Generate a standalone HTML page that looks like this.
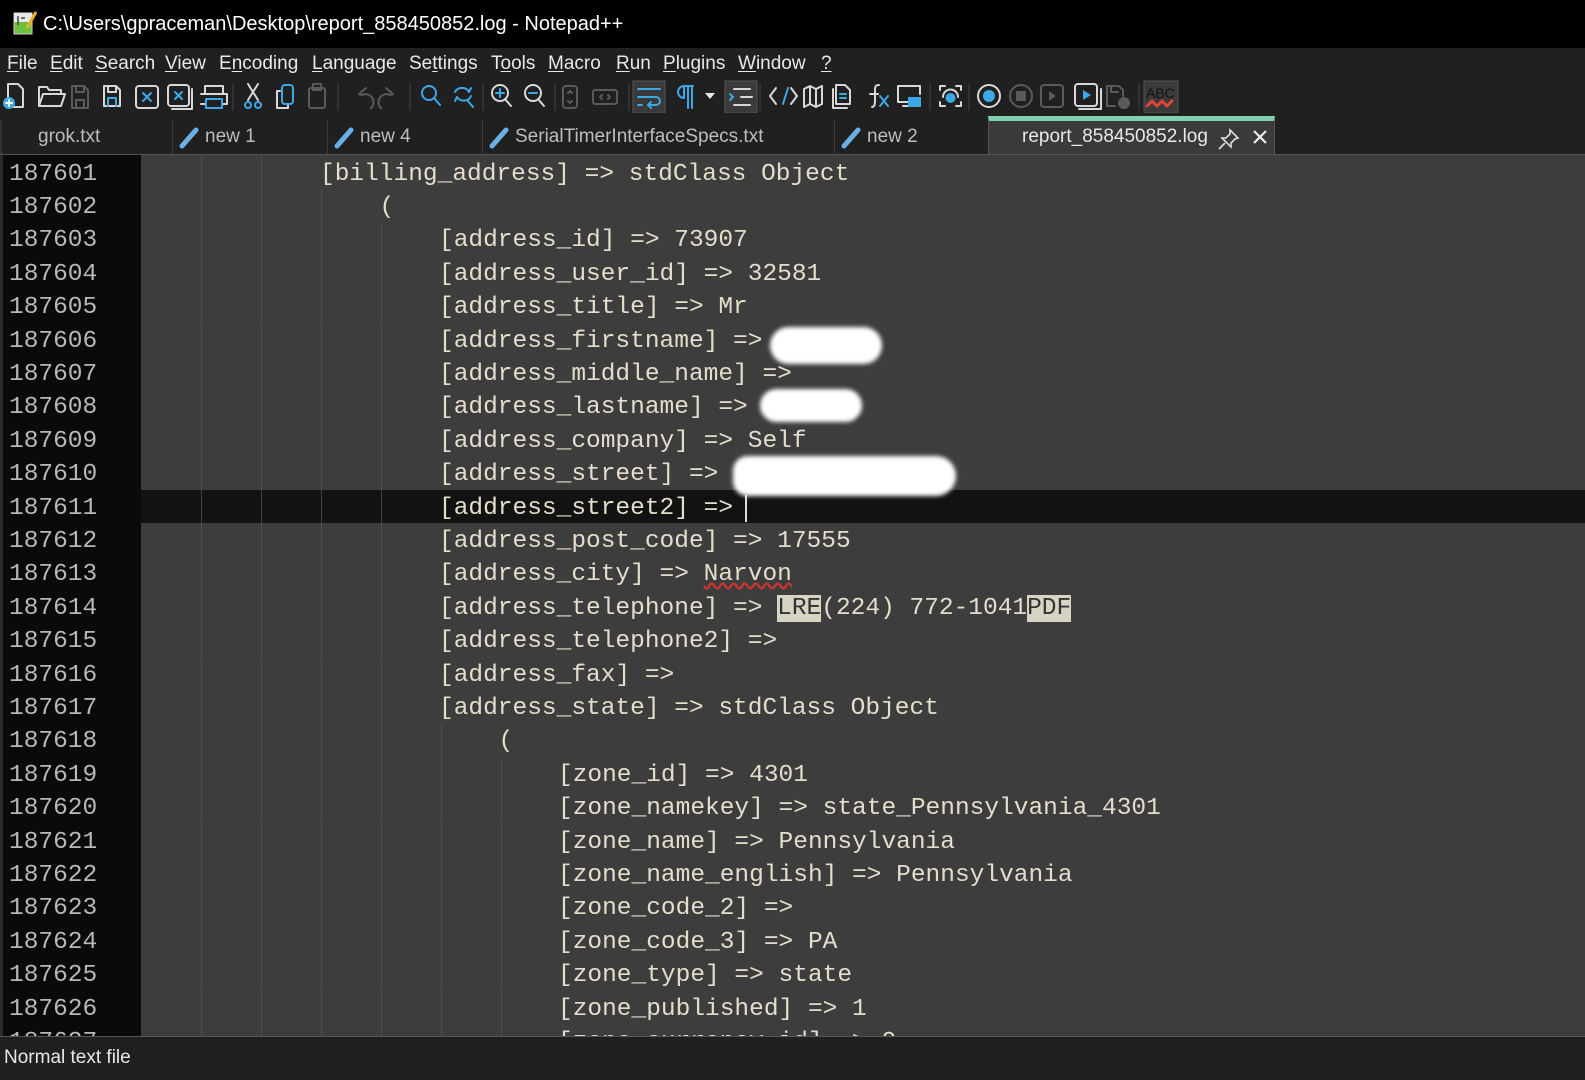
<!DOCTYPE html>
<html><head><meta charset="utf-8">
<style>
*{margin:0;padding:0;box-sizing:border-box}
body{width:1585px;height:1080px;overflow:hidden;background:#202020;font-family:"Liberation Sans",sans-serif;position:relative}
.title{position:absolute;left:0;top:0;width:1585px;height:48px;background:#000;color:#fff;font-size:20px}
.title span{position:absolute;left:43px;top:13px}
.menu{position:absolute;left:0;top:48px;width:1585px;height:32px;background:#202020;color:#e8e8e8;font-size:19px}
.menu span{position:absolute;top:5px}
.menu u{text-decoration:underline;text-underline-offset:2px}
.tb{position:absolute;left:0;top:80px}
.tabs{position:absolute;left:0;top:113px;width:1585px;height:41px;background:#202020}
.tab{position:absolute;top:7px;height:34px;color:#bdbdbd;font-size:19px;border-left:1px solid #3a3a3a;padding-top:6px}
.tab svg{position:absolute;left:4px;top:4px}
.active{background:#3a3a3a;border-top:5px solid #7fd1b0;top:3px;height:38px;color:#e8e8e8;padding-top:5px;border-left:1px solid #555;border-right:1px solid #555}
.editor{position:absolute;left:0;top:154px;width:1585px;height:882px;background:#3d3d3d;overflow:hidden;border-top:1px solid #555}
.gut{position:absolute;left:0;top:0;width:141px;height:882px;background:#0a0a0a;border-left:3px solid #2a2a2a}
.ln{position:absolute;left:0;height:33.4px;width:1585px;font-family:"Liberation Mono",monospace;font-size:24.5px;line-height:33.4px;color:#e4ddcc;white-space:pre}
.ln .n{position:absolute;left:9px;top:2px;color:#b8b8b8}
.ln .t{position:absolute;top:2px}
.cur{background:#121212}
.g{position:absolute;top:0;left:142px;height:33.4px;background:repeating-linear-gradient(90deg,transparent 0 59px,#555 59px 60px);opacity:.7}
.blob{position:absolute;background:#fff;border-radius:30px;filter:blur(2px)}
.status{position:absolute;left:0;top:1036px;width:1585px;height:44px;background:#202020;border-top:1px solid #555;color:#e8e8e8;font-size:19px}
.status span{position:absolute;left:4px;top:10px}
.box{background:#d8d4c4;color:#333}
.l3{left:320px}.l4{left:379.5px}.l5{left:439px}.l6{left:498.5px}.l7{left:558px}
.w3{width:178.5px}.w4{width:238px}.w5{width:297.5px}.w6{width:357px}.w7{width:416.5px}
</style></head><body>
<div class="title">
<svg style="position:absolute;left:13px;top:10px" width="24" height="26"><rect x="1" y="3" width="18" height="21" fill="#6fbf3f" stroke="#ccc"/><rect x="1" y="3" width="18" height="9" fill="#e8e8e8"/><path d="M14 18 L23 2" stroke="#f0b020" stroke-width="3"/><path d="M5 6v9M8 8h4" stroke="#444" stroke-width="1.5"/></svg>
<span>C:\Users\gpraceman\Desktop\report_858450852.log - Notepad++</span></div>
<div class="menu">
<span style="left:7px"><u>F</u>ile</span><span style="left:50px"><u>E</u>dit</span><span style="left:95px"><u>S</u>earch</span><span style="left:165px"><u>V</u>iew</span><span style="left:219px">E<u>n</u>coding</span><span style="left:312px"><u>L</u>anguage</span><span style="left:409px">Se<u>t</u>tings</span><span style="left:491px">T<u>o</u>ols</span><span style="left:548px"><u>M</u>acro</span><span style="left:616px"><u>R</u>un</span><span style="left:663px"><u>P</u>lugins</span><span style="left:738px"><u>W</u>indow</span><span style="left:821px"><u>?</u></span>
</div>
<svg class="tb" width="1200" height="33" fill="none" stroke-width="2" stroke-linecap="round" stroke-linejoin="round">
<g stroke="#d8d8d8">
<path d="M8 4h10l5 5v18H8z"/><circle cx="9" cy="23" r="6" fill="#3ca8e8" stroke="none"/><path d="M9 20v6M6 23h6" stroke="#fff"/>
<path d="M39 26V7h8l2 3h12v4M39 26l4-12h22l-4 12z"/>
<path d="M104 6h12l4 4v16h-16z M108 6v6h8V6"/><path d="M108 26v-8h8v8" stroke="#3ca8e8"/>
<rect x="136" y="6" width="22" height="22" rx="3"/><path d="M143 13l8 8M151 13l-8 8" stroke="#3ca8e8"/>
<rect x="168" y="5" width="21" height="21" rx="3"/><path d="M172 29h20V9"/><path d="M175 12l7 7M182 12l-7 7" stroke="#3ca8e8"/>
<path d="M205 14V6h18v8M201 14h26v10h-4M205 24h-4"/><rect x="206" y="19" width="16" height="9" stroke="#3ca8e8"/>
<path d="M248 4l10 16M258 4l-10 16"/><circle cx="248" cy="25" r="3" stroke="#3ca8e8"/><circle cx="258" cy="25" r="3" stroke="#3ca8e8"/>
<path d="M280 11h-3v17h11v-3"/><rect x="282" y="5" width="11" height="19" rx="3" stroke="#3ca8e8"/>
<circle cx="429" cy="13" r="7" stroke="#3ca8e8"/><path d="M434 18l6 7" stroke="#3ca8e8"/>
<path d="M455 12a8 8 0 0 1 14 0l2-4M471 16a8 8 0 0 1-14 1l-2 4M467 20l6 7" stroke="#3ca8e8"/>
<circle cx="500" cy="13" r="8"/><path d="M505 19l6 7"/><path d="M496 13h8M500 9v8" stroke="#3ca8e8"/>
<circle cx="533" cy="13" r="8"/><path d="M538 19l6 7"/><path d="M529 13h8" stroke="#3ca8e8"/>
<path d="M776 8l-6 8 6 8"/><path d="M783 24l5-16" stroke="#3ca8e8"/><path d="M791 8l6 8-6 8"/>
<path d="M804 9l6-3 6 3 6-3v18l-6 3-6-3-6 3zM810 6v18M816 9v18"/>
<path d="M836 5h9l5 5v14h-14zM833 9v19h14"/><path d="M840 14h6M840 18h6" stroke="#3ca8e8"/>
<path d="M872 27c2 0 3-2 3-6V10c0-4 1-5 4-5M870 14h8"/><path d="M880 16l8 10M888 16l-8 10" stroke="#3ca8e8"/>
<path d="M898 22V6h22v8M898 22h10M903 26h6"/><rect x="908" y="17" width="13" height="10" fill="#3ca8e8" stroke="none"/>
<path d="M940 10V6h5M961 10V6h-5M940 22v4h5M961 22v4h-5"/><path d="M943 17a7 7 0 0 1 15 0"/><circle cx="950.5" cy="18" r="5" fill="#3ca8e8" stroke="none"/>
<circle cx="989" cy="16" r="11"/><circle cx="989" cy="16" r="6" fill="#3ca8e8" stroke="none"/>
<rect x="1075" y="4" width="22" height="22" rx="3"/><path d="M1079 29h22V9"/><path d="M1083 10l8 5-8 5z" fill="#3ca8e8" stroke="none"/>
</g>
<g stroke="#5a5a5a">
<path d="M72 6h12l4 4v18H72z M76 6v6h8V6 M76 28v-8h8v8"/>
<rect x="309" y="8" width="16" height="20" rx="2"/><rect x="313" y="4" width="8" height="6"/>
<path d="M366 8l-7 6 3 1a8 8 0 0 1 9 13"/><path d="M386 8l7 6-3 1a8 8 0 0 0-9 13"/>
<rect x="563" y="6" width="14" height="22" rx="3"/><path d="M568 13l2-2 2 2M568 21l2 2 2-2"/>
<rect x="593" y="10" width="24" height="14" rx="2"/><path d="M602 15l-2 2 2 2M608 15l2 2-2 2"/>
<circle cx="1021" cy="16" r="11"/><rect x="1016" y="11" width="10" height="10" fill="#5a5a5a" stroke="none"/>
<rect x="1041" y="5" width="22" height="22" rx="3"/><path d="M1049 11l7 5-7 5z" fill="#5a5a5a" stroke="none"/>
<path d="M1107 6h12l4 4v6M1107 6v20h8M1111 6v6h7"/><circle cx="1124" cy="23" r="6" fill="#5a5a5a" stroke="none"/>
</g>
<g stroke="#444" stroke-width="1"><path d="M233 4v26M338 4v26M410 4v26M483 4v26M555 4v26M629 4v26M760 4v26M930 4v26M969 4v26M1139 4v26"/></g>
<rect x="633" y="1" width="32" height="32" fill="#3a3a3a" stroke="#555" stroke-width="1"/>
<path d="M638 9h22M638 17h18a4 4 0 0 1 0 8h-8M651 22l-3 3 3 3M638 25h4" stroke="#3ca8e8"/>
<path d="M688 6v22M684 6v12a6 6 0 0 1 0-12h9M692 6v22" stroke="#3ca8e8"/>
<path d="M705 13h10l-5 6z" fill="#e8e8e8"/>
<rect x="725" y="1" width="32" height="32" fill="#3a3a3a" stroke="#555" stroke-width="1"/>
<path d="M734 9h16M741 17h11M734 25h16" stroke="#d8d8d8"/><path d="M730 14l3 3-3 3" stroke="#3ca8e8"/>
<rect x="1144" y="1" width="34" height="32" fill="#3a3a3a" stroke="#555" stroke-width="1"/>
<text x="1146" y="18" font-family="Liberation Sans" font-size="14" fill="#111" stroke="none">ABC</text>
<path d="M1147 26l5-5 5 5 5-5 5 5 5-5" stroke="#e0443a" stroke-width="3"/>
</svg>
<div class="tabs">
<div class="tab" style="left:0;width:172px;border-left:2px solid #333"><span style="position:absolute;left:36px">grok.txt</span></div>
<div class="tab" style="left:172px;width:155px"><svg width="24" height="26"><path d="M5 22l14-16" stroke="#6ab0e4" stroke-width="5" stroke-linecap="round"/></svg><span style="position:absolute;left:32px">new 1</span></div>
<div class="tab" style="left:327px;width:155px"><svg width="24" height="26"><path d="M5 22l14-16" stroke="#6ab0e4" stroke-width="5" stroke-linecap="round"/></svg><span style="position:absolute;left:32px">new 4</span></div>
<div class="tab" style="left:482px;width:352px"><svg width="24" height="26"><path d="M5 22l14-16" stroke="#6ab0e4" stroke-width="5" stroke-linecap="round"/></svg><span style="position:absolute;left:32px">SerialTimerInterfaceSpecs.txt</span></div>
<div class="tab" style="left:834px;width:154px"><svg width="24" height="26"><path d="M5 22l14-16" stroke="#6ab0e4" stroke-width="5" stroke-linecap="round"/></svg><span style="position:absolute;left:32px">new 2</span></div>
<div class="tab active" style="left:988px;width:287px"><span style="position:absolute;left:33px">report_858450852.log</span>
<svg style="left:228px;top:6px" width="24" height="24" fill="none" stroke="#ddd" stroke-width="1.6"><path d="M13 3l8 8-3 1-4 4 0 4-9-9 4 0 4-4zM8 16l-6 6"/></svg>
<svg style="left:262px;top:7px" width="18" height="18" stroke="#eee" stroke-width="2.2"><path d="M3 3l12 12M15 3L3 15"/></svg></div>
</div>
<div class="editor">
<div class="gut"></div>
<div class="ln" style="top:0.5px"><div class="g w3"></div><span class="n">187601</span><span class="t l3">[billing_address] =&gt; stdClass Object</span></div>
<div class="ln" style="top:33.9px"><div class="g w4"></div><span class="n">187602</span><span class="t l4">(</span></div>
<div class="ln" style="top:67.3px"><div class="g w5"></div><span class="n">187603</span><span class="t l5">[address_id] =&gt; 73907</span></div>
<div class="ln" style="top:100.7px"><div class="g w5"></div><span class="n">187604</span><span class="t l5">[address_user_id] =&gt; 32581</span></div>
<div class="ln" style="top:134.1px"><div class="g w5"></div><span class="n">187605</span><span class="t l5">[address_title] =&gt; Mr</span></div>
<div class="ln" style="top:167.5px"><div class="g w5"></div><span class="n">187606</span><span class="t l5">[address_firstname] =&gt;</span></div>
<div class="ln" style="top:200.9px"><div class="g w5"></div><span class="n">187607</span><span class="t l5">[address_middle_name] =&gt;</span></div>
<div class="ln" style="top:234.3px"><div class="g w5"></div><span class="n">187608</span><span class="t l5">[address_lastname] =&gt;</span></div>
<div class="ln" style="top:267.7px"><div class="g w5"></div><span class="n">187609</span><span class="t l5">[address_company] =&gt; Self</span></div>
<div class="ln" style="top:301.1px"><div class="g w5"></div><span class="n">187610</span><span class="t l5">[address_street] =&gt;</span></div>
<div class="ln cur" style="top:334.5px"><div style="position:absolute;left:0;top:0;width:141px;height:33.4px;background:#0a0a0a;border-left:3px solid #2a2a2a"></div><div class="g w5"></div><span class="n">187611</span><span class="t l5">[address_street2] =&gt;<span style="border-left:2px solid #ddd;margin-left:12px"></span></span></div>
<div class="ln" style="top:367.9px"><div class="g w5"></div><span class="n">187612</span><span class="t l5">[address_post_code] =&gt; 17555</span></div>
<div class="ln" style="top:401.3px"><div class="g w5"></div><span class="n">187613</span><span class="t l5">[address_city] =&gt; <span style="text-decoration:underline wavy #c33">Narvon</span></span></div>
<div class="ln" style="top:434.7px"><div class="g w5"></div><span class="n">187614</span><span class="t l5">[address_telephone] =&gt; <span class="box">LRE</span>(224) 772-1041<span class="box">PDF</span></span></div>
<div class="ln" style="top:468.1px"><div class="g w5"></div><span class="n">187615</span><span class="t l5">[address_telephone2] =&gt;</span></div>
<div class="ln" style="top:501.5px"><div class="g w5"></div><span class="n">187616</span><span class="t l5">[address_fax] =&gt;</span></div>
<div class="ln" style="top:534.9px"><div class="g w5"></div><span class="n">187617</span><span class="t l5">[address_state] =&gt; stdClass Object</span></div>
<div class="ln" style="top:568.3px"><div class="g w6"></div><span class="n">187618</span><span class="t l6">(</span></div>
<div class="ln" style="top:601.7px"><div class="g w7"></div><span class="n">187619</span><span class="t l7">[zone_id] =&gt; 4301</span></div>
<div class="ln" style="top:635.1px"><div class="g w7"></div><span class="n">187620</span><span class="t l7">[zone_namekey] =&gt; state_Pennsylvania_4301</span></div>
<div class="ln" style="top:668.5px"><div class="g w7"></div><span class="n">187621</span><span class="t l7">[zone_name] =&gt; Pennsylvania</span></div>
<div class="ln" style="top:701.9px"><div class="g w7"></div><span class="n">187622</span><span class="t l7">[zone_name_english] =&gt; Pennsylvania</span></div>
<div class="ln" style="top:735.3px"><div class="g w7"></div><span class="n">187623</span><span class="t l7">[zone_code_2] =&gt;</span></div>
<div class="ln" style="top:768.7px"><div class="g w7"></div><span class="n">187624</span><span class="t l7">[zone_code_3] =&gt; PA</span></div>
<div class="ln" style="top:802.1px"><div class="g w7"></div><span class="n">187625</span><span class="t l7">[zone_type] =&gt; state</span></div>
<div class="ln" style="top:835.5px"><div class="g w7"></div><span class="n">187626</span><span class="t l7">[zone_published] =&gt; 1</span></div>
<div class="ln" style="top:868.9px"><div class="g w7"></div><span class="n">187627</span><span class="t l7">[zone_currency_id] =&gt; 0</span></div>
<div class="blob" style="left:770px;top:172px;width:112px;height:37px"></div>
<div class="blob" style="left:760px;top:234px;width:102px;height:33px"></div>
<div class="blob" style="left:733px;top:301px;width:223px;height:40px;border-radius:22px 30px 30px 22px"></div>
</div>
<div class="status"><span>Normal text file</span></div>
</body></html>
